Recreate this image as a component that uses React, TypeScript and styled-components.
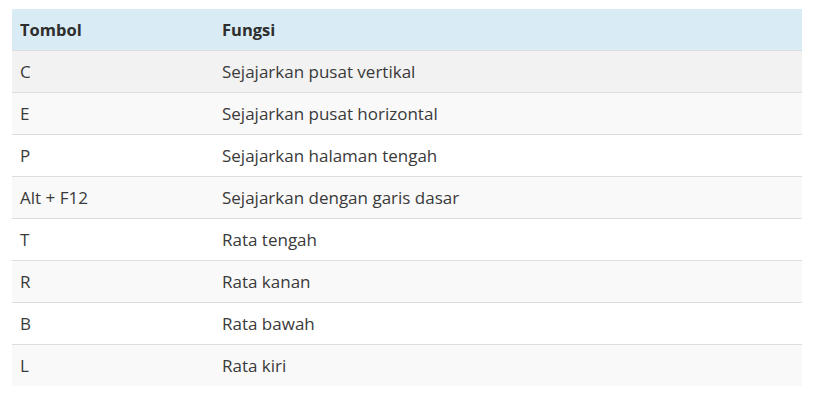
import React from "react";
import styled, { createGlobalStyle } from "styled-components";

const Global = createGlobalStyle`
  html, body { margin: 0; padding: 0; background: #ffffff; }
  body { font-family: "Open Sans", sans-serif; }
`;

const Page = styled.div`
  padding: 9px 13px 0 12px;
`;

const Table = styled.table`
  width: 790px;
  border-collapse: collapse;
  border-spacing: 0;
  font-family: "Open Sans", sans-serif;
  font-size: 17px;
  color: #3a3a3a;
`;

const HeadCell = styled.th<{ $w?: number }>`
  background: #d9ecf5;
  text-align: left;
  font-weight: 700;
  font-size: 16.5px;
  height: 41px;
  padding: 0 8px;
  color: #2e2e2e;
  width: ${(p) => (p.$w ? `${p.$w}px` : "auto")};
`;

const Row = styled.tr<{ $bg: string }>`
  background: ${(p) => p.$bg};
`;

const Cell = styled.td`
  height: 41px;
  padding: 0 8px;
  border-top: 1px solid #dddddd;
`;

const rows: [string, string][] = [
  ["C", "Sejajarkan pusat vertikal"],
  ["E", "Sejajarkan pusat horizontal"],
  ["P", "Sejajarkan halaman tengah"],
  ["Alt + F12", "Sejajarkan dengan garis dasar"],
  ["T", "Rata tengah"],
  ["R", "Rata kanan"],
  ["B", "Rata bawah"],
  ["L", "Rata kiri"],
];

export default function App() {
  return (
    <>
      <Global />
      <Page>
        <Table>
          <thead>
            <tr>
              <HeadCell $w={186}>Tombol</HeadCell>
              <HeadCell>Fungsi</HeadCell>
            </tr>
          </thead>
          <tbody>
            {rows.map(([k, f], i) => (
              <Row key={k} $bg={i === 0 ? "#f2f2f2" : i % 2 === 1 ? "#f9f9f9" : "#ffffff"}>
                <Cell>{k}</Cell>
                <Cell>{f}</Cell>
              </Row>
            ))}
          </tbody>
        </Table>
      </Page>
    </>
  );
}
